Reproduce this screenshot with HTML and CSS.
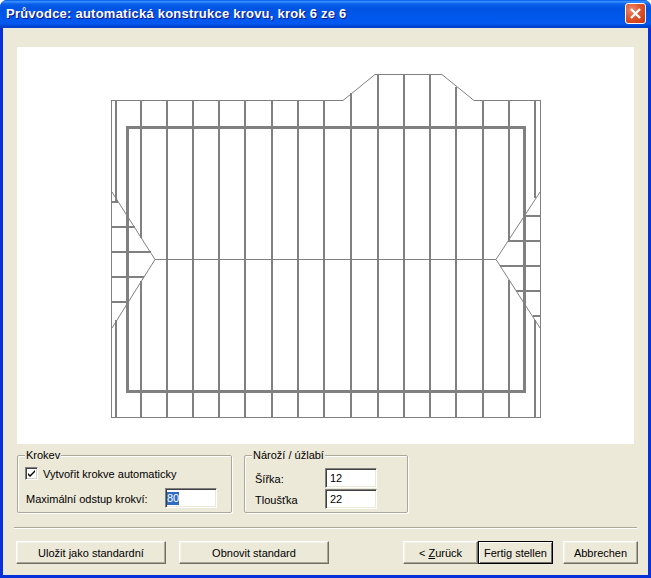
FILE: index.html
```html
<!DOCTYPE html>
<html lang="cs">
<head>
<meta charset="utf-8">
<title>Průvodce</title>
<link rel="stylesheet" href="styles.css">
</head>
<body>
<div class="window">
  <header class="titlebar">
    <span class="title">Průvodce: automatická konstrukce krovu, krok 6 ze 6</span>
    <span class="close">
      <svg width="13" height="13" viewBox="0 0 13 13"><path d="M2 2 L11 11 M11 2 L2 11" stroke="#fff" stroke-width="2.4" fill="none"/></svg>
    </span>
  </header>
  <main class="client">
    <div class="canvas">
      <svg class="drawing" width="617" height="397" viewBox="17 47 617 397" shape-rendering="crispEdges">
        <g class="thin">
          <path d="M111.5 100 V418 M540.5 100 V418 M111.5 417.5 H540.5 M111.5 100.5 H343 M474 100.5 H540.5 M375 74.5 H442 M155 259.5 H496"/>
        </g>
        <g class="thin" shape-rendering="auto">
          <path d="M343 100.5 L375 74.5 M442 74.5 L474 100.5 M112 192 L155 259.5 L112 328 M540 192 L496 259.5 L540 328"/>
        </g>
        <g class="rafter">
          <path d="M116 100 V201 M116 320 V418 M141 100 V238 M141 281 V418"/>
          <path d="M167 100 V418 M193 100 V418 M219 100 V418 M245 100 V418 M272 100 V418 M298 100 V418 M324 100 V418"/>
          <path d="M351 93 V418 M378 74 V418 M404 74 V418 M430 74 V418 M456 87 V418 M483 100 V418"/>
          <path d="M509 100 V240 M509 280 V418 M535 100 V198 M535 320 V418"/>
          <path d="M112 202 H118 M112 227 H135 M112 252 H151 M112 277 H144 M112 302 H127"/>
          <path d="M526 216 H540 M508 241 H540 M500 266 H540 M516 291 H540 M533 316 H540"/>
        </g>
        <rect class="wall" x="127.5" y="127.5" width="397" height="264"/>
      </svg>
    </div>
    <div class="groups">
      <section class="group group-krokev">
        <span class="legend">Krokev</span>
        <label class="check-row">
          <span class="checkbox">
            <svg width="9" height="9" viewBox="0 0 9 9"><path d="M1 4 L3 6 L8 1 V3 L3 8 L1 6 Z" fill="#000"/></svg>
          </span>
          <span>Vytvořit krokve automaticky</span>
        </label>
        <div class="field-row">
          <span class="field-label">Maximální odstup krokví:</span>
          <span class="input"><span class="selected">80</span></span>
        </div>
      </section>
      <section class="group group-naroz">
        <span class="legend">Nároží / úžlabí</span>
        <div class="field-row">
          <span class="field-label">Šířka:</span>
          <span class="input">12</span>
        </div>
        <div class="field-row">
          <span class="field-label">Tloušťka</span>
          <span class="input">22</span>
        </div>
      </section>
    </div>
    <hr class="separator">
    <div class="buttons">
      <button class="btn btn-wide">Uložit jako standardní</button>
      <button class="btn btn-wide">Obnovit standard</button>
      <span class="spacer"></span>
      <button class="btn btn-back">&lt; <u>Z</u>urück</button>
      <button class="btn btn-default">Fertig stellen</button>
      <button class="btn btn-cancel">Abbrechen</button>
    </div>
  </main>
</div>
</body>
</html>
```
FILE: styles.css
```css
* { box-sizing: border-box; }
html, body { margin: 0; padding: 0; background: #fff; }
body { width: 651px; height: 578px; overflow: hidden; font-family: "Liberation Sans", Arial, sans-serif; font-size: 11px; color: #000; }
.window { width: 651px; height: 578px; display: flex; flex-direction: column; background: #0831d9; border-radius: 7px 7px 0 0; overflow: hidden; }
.titlebar { height: 28px; flex: none; display: flex; align-items: center; justify-content: space-between; padding: 0 5px 2px 6px;
  background: linear-gradient(180deg, #0058e6 0%, #3a93ff 6%, #0a5fec 14%, #0054e3 30%, #0058ee 70%, #0558f0 85%, #0045d0 93%, #003dd0 100%); }
.title { color: #fff; font-weight: bold; font-size: 13px; letter-spacing: 0.23px; text-shadow: 1px 1px 0 #0f1089; }
.close { width: 21px; height: 21px; display: flex; align-items: center; justify-content: center; border: 1px solid #fff; border-radius: 3px;
  background: radial-gradient(circle at 30% 30%, #ec8a6c 0%, #e0552e 45%, #c43410 100%); }
.client { flex: 1; margin: 0 3px 3px; background: #ece9d8; padding: 19px 14px 0; display: flex; flex-direction: column; }
.canvas { width: 617px; height: 397px; background: #fff; flex: none; }
.drawing { display: block; }
.thin path { stroke: #808080; stroke-width: 1; fill: none; }
.rafter path { stroke: #808080; stroke-width: 2; fill: none; }
.wall { stroke: #808080; stroke-width: 3; fill: none; }
.groups { display: flex; gap: 12px; margin-top: 11px; height: 59px; flex: none; }
.group { position: relative; height: 58px; border: 1px solid #aca899; box-shadow: 1px 1px 0 #fff, inset 1px 1px 0 #fff; border-radius: 2px; }
.group-krokev { width: 215px; padding: 11px 14px 0 8px; }
.group-naroz { width: 164px; padding: 12px 30px 0 10px; display: flex; flex-direction: column; gap: 1px; }
.group-naroz .input { padding-left: 4px; }
.legend { position: absolute; left: 7px; top: -8px; background: #ece9d8; padding: 0 1px; line-height: 14px; white-space: nowrap; }
.check-row { display: flex; align-items: center; gap: 5px; height: 13px; margin-left: -1px; }
.checkbox { width: 13px; height: 13px; flex: none; background: #fff; border: 1px solid; border-color: #808080 #fff #fff #808080; box-shadow: inset 1px 1px 0 #404040, inset -1px -1px 0 #d4d0c8; display: flex; align-items: center; justify-content: center; }
.group-krokev .field-row { margin-top: 8px; }
.field-row { display: flex; justify-content: space-between; align-items: center; }
.field-label { position: relative; top: 1px; }
.input { width: 52px; height: 20px; background: #fff; border: 1px solid; border-color: #808080 #fff #fff #808080; box-shadow: inset 1px 1px 0 #404040, inset -1px -1px 0 #ece9d8; padding: 2px 0 0 1px; line-height: 15px; }
.selected { background: #316ac5; color: #fff; display: inline-block; line-height: 13px; }
.separator { width: 623px; height: 2px; flex: none; margin: 13px 0 0 -3px; border: 0; border-top: 1px solid #aca899; border-bottom: 1px solid #fff; }
.buttons { display: flex; margin: 12px 0 0 -1px; width: 622px; flex: none; }
.spacer { flex: 1; }
.btn { height: 23px; padding: 0; margin: 0; font: inherit; color: #000; background: #ece9d8; border: 1px solid; border-color: #fff #716f64 #716f64 #fff; box-shadow: inset -1px -1px 0 #aca899, inset 1px 1px 0 #f5f4ec; }
.btn-wide { width: 150px; margin-right: 13px; }
.btn-wide:nth-child(2) { margin-right: 0; }
.btn-back { width: 75px; }
.btn-default { width: 75px; margin-right: 10px; border-color: #000; box-shadow: inset 1px 1px 0 #fff, inset -1px -1px 0 #716f64; }
.btn-cancel { width: 75px; }
```
